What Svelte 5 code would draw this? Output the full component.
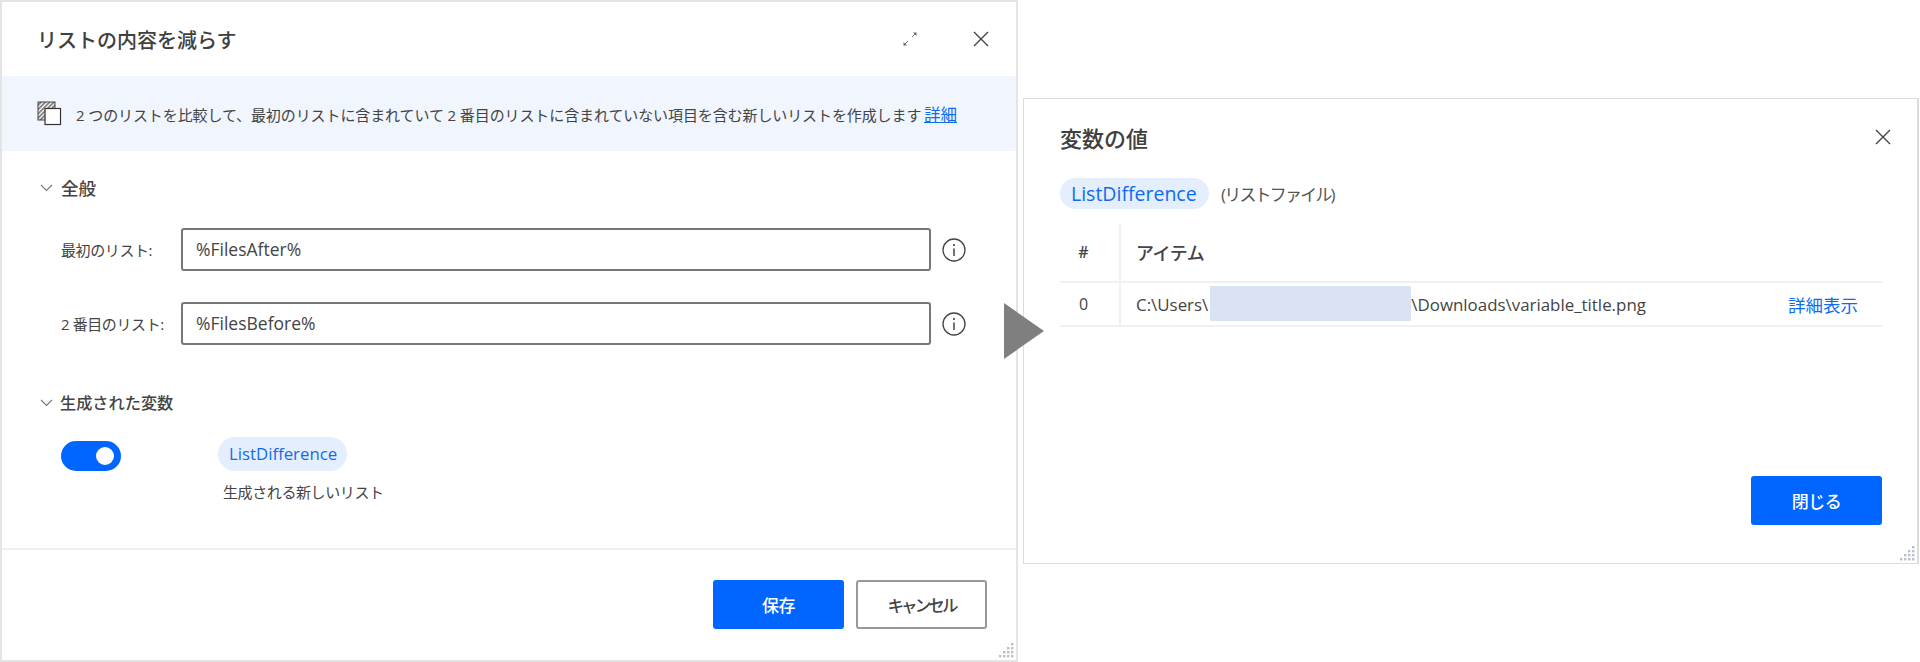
<script lang="ts">
  const fields = [
    { label: "最初のリスト:", value: "%FilesAfter%" },
    { label: "2 番目のリスト:", value: "%FilesBefore%" },
  ];
  const grip = [[12,0],[8,4],[12,4],[4,8],[8,8],[12,8],[0,12],[4,12],[8,12],[12,12]];
</script>

{#snippet gripIcon()}
  <svg class="grip" width="15" height="15" viewBox="0 0 15 15" aria-hidden="true">
    {#each grip as [x, y]}
      <rect {x} {y} width="2.4" height="2.4" fill="#b9bfcc" />
    {/each}
  </svg>
{/snippet}

{#snippet closeIcon()}
  <svg class="close" width="16" height="16" viewBox="0 0 16 16" aria-hidden="true">
    <path d="M1 1 15 15M15 1 1 15" stroke="#444" stroke-width="1.4" fill="none" />
  </svg>
{/snippet}

{#snippet chevron()}
  <svg class="chevron" width="13" height="8" viewBox="0 0 13 8" aria-hidden="true">
    <path d="M1 1 6.5 6.5 12 1" stroke="#777" stroke-width="1.1" fill="none" />
  </svg>
{/snippet}

<div class="page">
  <section class="dialog left">
    <header class="head">
      <h1>リストの内容を減らす</h1>
      <div class="head-icons">
        <svg width="16" height="16" viewBox="0 0 16 16" aria-hidden="true">
          <path d="M3 13 6 10M13 3 10 6" stroke="#777" stroke-width="1" fill="none" />
          <path d="M1.5 14.5V11L5 14.5ZM14.5 1.5V5L11 1.5Z" fill="#666" />
        </svg>
        {@render closeIcon()}
      </div>
    </header>

    <div class="banner">
      <svg width="25" height="25" viewBox="0 0 25 25" aria-hidden="true">
        <defs>
          <pattern id="hatch" width="3" height="3" patternUnits="userSpaceOnUse" patternTransform="rotate(45)">
            <rect width="3" height="3" fill="#fff" />
            <rect width="1.5" height="3" fill="#666" />
          </pattern>
        </defs>
        <rect x="1" y="1" width="17" height="18" fill="url(#hatch)" stroke="#444" />
        <rect x="8" y="7.5" width="15.5" height="16" fill="#fff" stroke="#333" stroke-width="1.2" />
      </svg>
      <p>2 つのリストを比較して、最初のリストに含まれていて 2 番目のリストに含まれていない項目を含む新しいリストを作成します <a href="#top">詳細</a></p>
    </div>

    <div class="section-title first">{@render chevron()}<span>全般</span></div>

    <div class="fields">
      {#each fields as f}
        <div class="field">
          <span class="label">{f.label}</span>
          <div class="input">{f.value}</div>
          <svg width="24" height="24" viewBox="0 0 24 24" aria-hidden="true">
            <circle cx="12" cy="12" r="11" stroke="#444" stroke-width="1.3" fill="none" />
            <path d="M12 10.5V18" stroke="#444" stroke-width="1.5" />
            <circle cx="12" cy="7" r="1.1" fill="#444" />
          </svg>
        </div>
      {/each}
    </div>

    <div class="section-title second">{@render chevron()}<span>生成された変数</span></div>

    <div class="output">
      <div class="toggle"><span></span></div>
      <div class="output-info">
        <span class="chip small">ListDifference</span>
        <p>生成される新しいリスト</p>
      </div>
    </div>

    <footer class="foot">
      <button class="btn primary">保存</button>
      <button class="btn cancel">キャンセル</button>
    </footer>
    {@render gripIcon()}
  </section>

  <section class="dialog right">
    <header class="head-right">
      <h2>変数の値</h2>
      {@render closeIcon()}
    </header>
    <div class="var-line">
      <span class="chip">ListDifference</span>
      <span class="type">(リストファイル)</span>
    </div>
    <div class="table">
      <div class="cell num hd">#</div>
      <div class="cell item hd">アイテム</div>
      <div class="cell num">0</div>
      <div class="cell item row">
        <span class="path">C:\Users\<span class="redact"></span>\Downloads\variable_title.png</span>
        <a href="#top">詳細表示</a>
      </div>
    </div>
    <div class="right-foot">
      <button class="btn primary">閉じる</button>
    </div>
    {@render gripIcon()}
  </section>

  <div class="arrow"></div>
</div>

<style>
  :global(body) {
    margin: 0;
    background: #fff;
  }

  .page {
    position: relative;
    display: flex;
    align-items: flex-start;
    width: 1920px;
    height: 662px;
    overflow: hidden;
    color: #444;
    font-family: "Open Sans", "Noto Sans CJK JP", sans-serif;
    font-size: 15px;
  }

  .dialog {
    position: relative;
    box-sizing: border-box;
    background: #fff;
  }

  .left {
    width: 1018px;
    height: 662px;
    border: 2px solid #e4e4e4;
  }

  .right {
    width: 896px;
    height: 466px;
    margin: 98px 0 0 5px;
    border: 1px solid #dcdcdc;
    border-right-width: 2px;
    padding: 0 35px 0 36px;
  }

  .head {
    display: flex;
    align-items: center;
    justify-content: space-between;
    height: 74px;
    padding: 0 27px 0 35px;
  }

  h1, h2 {
    margin: 0;
    font-size: 20px;
    font-weight: 500;
    color: #404040;
  }

  h2 {
    font-size: 22px;
  }

  .head-icons {
    display: flex;
    align-items: center;
    gap: 55px;
  }

  .banner {
    display: flex;
    align-items: center;
    gap: 14px;
    height: 75px;
    padding-left: 35px;
    background: #f0f5fe;
  }

  .banner p {
    margin: 0;
    font-size: 15px;
    letter-spacing: -0.1px;
    white-space: nowrap;
  }

  .banner a {
    font-size: 16.5px;
    margin-left: -1px;
  }

  a {
    color: #0f6cf0;
  }

  .right a {
    text-decoration: none;
    margin-right: 24px;
    font-size: 17.5px;
  }

  .section-title {
    display: flex;
    align-items: center;
    gap: 8px;
    padding-left: 38px;
    font-size: 17.5px;
    font-weight: 500;
    line-height: 24px;
  }

  .first {
    margin-top: 25px;
  }

  .second {
    margin-top: 46px;
    gap: 7px;
    font-size: 16.2px;
  }

  .fields {
    display: flex;
    flex-direction: column;
    gap: 31px;
    margin-top: 28px;
  }

  .field {
    display: grid;
    grid-template-columns: 120px 750px 24px;
    align-items: center;
    padding-left: 59px;
  }

  .field svg {
    margin-left: 11px;
  }

  .label {
    font-size: 15px;
    letter-spacing: -0.4px;
    white-space: nowrap;
  }

  .input {
    box-sizing: border-box;
    height: 43px;
    line-height: 39px;
    border: 2px solid #777;
    border-radius: 3px;
    padding-left: 13px;
    font-size: 17.5px;
  }

  .output {
    display: flex;
    margin-top: 22px;
    padding-left: 59px;
  }

  .toggle {
    display: flex;
    align-items: center;
    justify-content: flex-end;
    box-sizing: border-box;
    width: 60px;
    height: 30px;
    margin-top: 4px;
    padding-right: 7px;
    border-radius: 15px;
    background: #0066ff;
  }

  .toggle span {
    width: 18px;
    height: 18px;
    border-radius: 50%;
    background: #fff;
  }

  .output-info {
    margin-left: 97px;
  }

  .output-info p {
    margin: 10px 0 0 5px;
    font-size: 15px;
    letter-spacing: -0.4px;
  }

  .chip {
    display: inline-block;
    box-sizing: border-box;
    width: 149px;
    padding-left: 11px;
    height: 31px;
    line-height: 31px;
    border-radius: 16px;
    background: #e4eefc;
    color: #0f6cf0;
    font-size: 19.5px;
    white-space: nowrap;
  }

  .chip.small {
    width: 129px;
    height: 34px;
    line-height: 34px;
    font-size: 16.8px;
    border-radius: 17px;
  }

  .foot {
    position: absolute;
    left: 0;
    right: 0;
    bottom: 0;
    display: flex;
    justify-content: flex-end;
    gap: 12px;
    height: 112px;
    box-sizing: border-box;
    padding: 30px 29px 0 0;
    border-top: 2px solid #efefef;
  }

  .btn {
    box-sizing: border-box;
    width: 131px;
    height: 49px;
    border: 2px solid #999;
    border-radius: 3px;
    background: #fff;
    color: #444;
    font: 500 17px "Open Sans", "Noto Sans CJK JP", sans-serif;
  }

  .cancel {
    font-size: 16.5px;
    letter-spacing: -2.9px;
  }

  .primary {
    border: 0;
    background: #0066ff;
    color: #fff;
    letter-spacing: -0.5px;
  }

  .grip {
    position: absolute;
    right: 2px;
    bottom: 2px;
  }

  .head-right {
    display: flex;
    align-items: center;
    justify-content: space-between;
    height: 73px;
    box-sizing: border-box;
    margin-top: 1px;
  }

  .head-right .close {
    margin-right: -9px;
  }

  .var-line {
    display: flex;
    align-items: center;
    gap: 12px;
    margin-top: 5px;
  }

  .type {
    font-size: 17px;
    letter-spacing: -1.8px;
    color: #555;
  }

  .table {
    display: grid;
    grid-template-columns: 61px 1fr;
    grid-template-rows: 60px 44px;
    margin-top: 14px;
  }

  .cell {
    display: flex;
    align-items: center;
    border-bottom: 2px solid #f0f0f0;
  }

  .num {
    justify-content: center;
    padding-right: 12px;
    border-right: 2px solid #f0f0f0;
    font-size: 16px;
  }

  .hd {
    font-weight: 600;
  }

  .item {
    padding-left: 15px;
    font-size: 16.9px;
  }

  .item.hd {
    font-size: 18px;
    font-weight: 500;
    letter-spacing: -0.5px;
  }

  .row {
    justify-content: space-between;
  }

  .path {
    display: flex;
    align-items: center;
  }

  .redact {
    width: 201px;
    height: 35px;
    margin: -2px 0 0 2px;
    background: #d9e3f3;
  }

  .right-foot {
    display: flex;
    justify-content: flex-end;
    margin-top: 149px;
  }

  .arrow {
    position: absolute;
    left: 1004px;
    top: 303px;
    width: 0;
    height: 0;
    border-style: solid;
    border-width: 28px 0 28px 40px;
    border-color: transparent transparent transparent #7f7f7f;
  }
</style>
